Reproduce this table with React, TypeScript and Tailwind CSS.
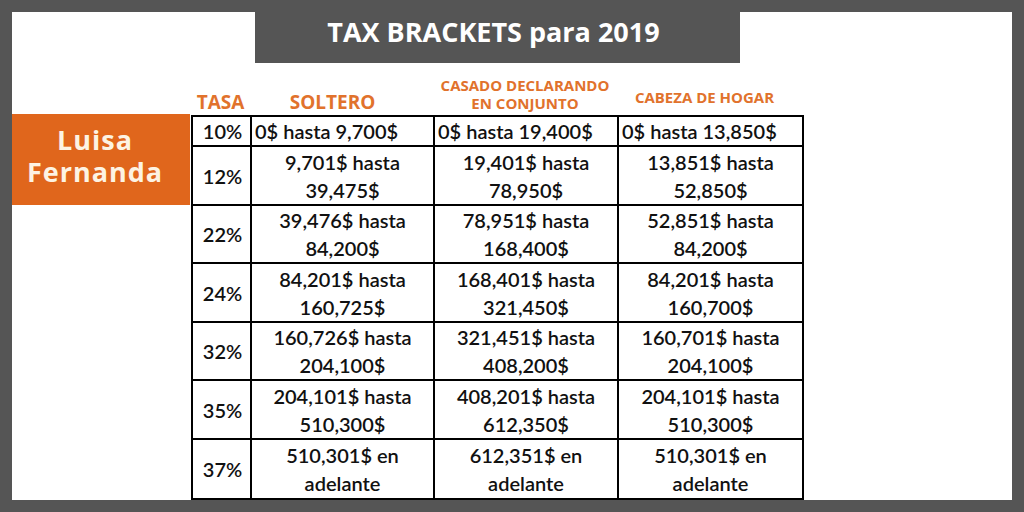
import React from 'react';

const rows = [
  { rate: '10%', cells: ['0$ hasta 9,700$', '0$ hasta 19,400$', '0$ hasta 13,850$'], h: 'h-[30px]' },
  { rate: '12%', cells: ['9,701$ hasta 39,475$', '19,401$ hasta 78,950$', '13,851$ hasta 52,850$'], h: 'h-[59px]' },
  { rate: '22%', cells: ['39,476$ hasta 84,200$', '78,951$ hasta 168,400$', '52,851$ hasta 84,200$'], h: 'h-[58px]' },
  { rate: '24%', cells: ['84,201$ hasta 160,725$', '168,401$ hasta 321,450$', '84,201$ hasta 160,700$'], h: 'h-[59px]' },
  { rate: '32%', cells: ['160,726$ hasta 204,100$', '321,451$ hasta 408,200$', '160,701$ hasta 204,100$'], h: 'h-[58px]' },
  { rate: '35%', cells: ['204,101$ hasta 510,300$', '408,201$ hasta 612,350$', '204,101$ hasta 510,300$'], h: 'h-[59px]' },
  { rate: '37%', cells: ['510,301$ en adelante', '612,351$ en adelante', '510,301$ en adelante'], h: 'h-[60px]' },
];

function Cell({ text }: { text: string }) {
  // first row sits on one line, left aligned; the rest break before the second amount
  if (text.startsWith('0$')) {
    return (
      <td className="border-2 border-black text-left align-middle pl-[3px] leading-[26px] whitespace-nowrap">
        {text}
      </td>
    );
  }
  const parts = text.includes(' hasta ')
    ? [text.replace(/ hasta .*/, ' hasta'), text.replace(/.* hasta /, '')]
    : [text.replace(/ adelante$/, ''), 'adelante'];
  return (
    <td className="border-2 border-black text-center align-middle leading-[28px] whitespace-nowrap">
      {parts.map((p, i) => (
        <div key={i}>{p}</div>
      ))}
    </td>
  );
}

export default function App() {
  return (
    <div className="w-[1024px] h-[512px] bg-[#555555] p-3 relative overflow-hidden">
      <div className="absolute left-[255px] top-0 w-[485px] h-[63px] bg-[#555555] flex items-center justify-center">
        <span className="text-white font-bold text-[27px] font-['Open_Sans',sans-serif] pt-[1px] pr-[8px]">
          TAX BRACKETS para 2019
        </span>
      </div>

      <div className="w-[1000px] h-[488px] bg-white flex flex-col pt-[77px]">
        <div className="ml-[179px] h-[33px] grid grid-cols-[59px_183px_184px_185px] items-center text-[#e1722c] font-bold font-['Open_Sans',sans-serif] text-center">
          <div className="text-[19px] leading-none">TASA</div>
          <div className="text-[19px] leading-none pr-[18px]">SOLTERO</div>
          <div className="text-[15px] leading-[18px] -mt-[17px]">
            CASADO DECLARANDO
            <br />
            EN CONJUNTO
          </div>
          <div className="text-[15px] leading-none -mt-[10px] pr-[10px]">CABEZA DE HOGAR</div>
        </div>

        <div className="flex items-start">
          <div className="w-[178px] h-[91px] bg-[#e0661c] flex flex-col items-center justify-center font-bold font-['Open_Sans',sans-serif] text-[#fdf3e3] text-[27px] tracking-[1px] leading-[32px] -mt-[1px] pb-[7px] pr-[12px]">
            <div>Luisa</div>
            <div>Fernanda</div>
          </div>
          <table className="border-collapse ml-[1px] text-[#111111] font-['Lato',sans-serif] text-[20px] font-semibold">
            <colgroup>
              <col className="w-[59px]" />
              <col className="w-[183px]" />
              <col className="w-[184px]" />
              <col className="w-[185px]" />
            </colgroup>
            <tbody>
              {rows.map((r) => (
                <tr key={r.rate} className={r.h}>
                  <td className="border-2 border-black text-center align-middle pl-[2px] leading-[26px]">{r.rate}</td>
                  {r.cells.map((c, i) => (
                    <Cell key={i} text={c} />
                  ))}
                </tr>
              ))}
            </tbody>
          </table>
        </div>
      </div>
    </div>
  );
}
